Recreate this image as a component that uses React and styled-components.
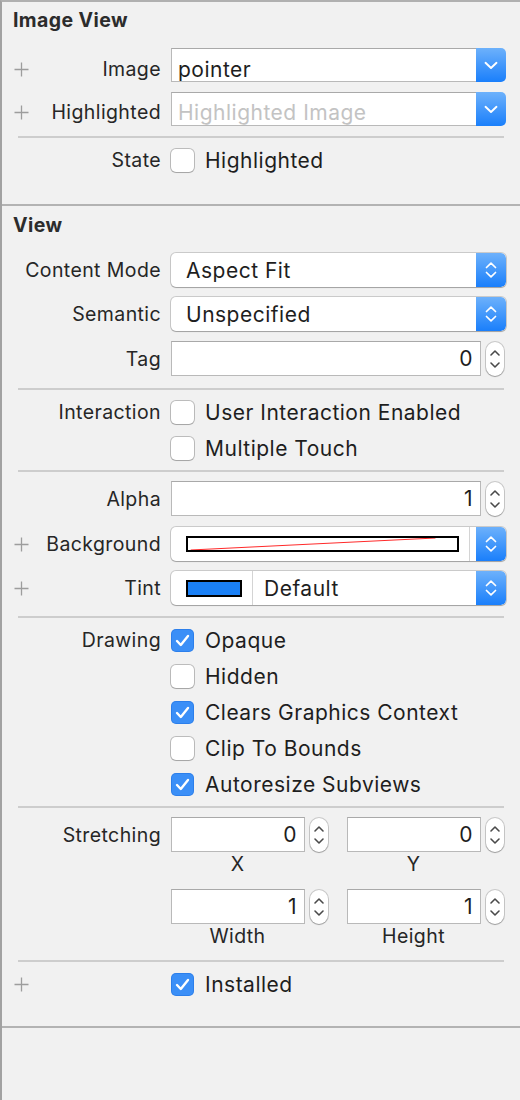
import React from 'react';
import styled, { createGlobalStyle } from 'styled-components';

const Global = createGlobalStyle`
  html, body { margin: 0; padding: 0; background: #f1f1f1; }
  body { font-family: Inter, "Noto Sans", "Liberation Sans", sans-serif; -webkit-font-smoothing: antialiased; }
`;

const Panel = styled.div`
  width: 520px;
  height: 1100px;
  box-sizing: border-box;
  border-left: 2px solid #a2a2a2;
  border-top: 2px solid #b0b0b0;
  background: #f1f1f1;
  color: #262626;
  font-size: 19.5px;
  letter-spacing: 0.4px;
  overflow: hidden;
`;

const Section = styled.section`
  display: flex;
  flex-direction: column;
  padding-bottom: ${p => p.$pb}px;
  border-bottom: 2px solid #b3b3b3;
`;

const Header = styled.div`
  height: ${p => p.$h}px;
  line-height: ${p => p.$h}px;
  padding-left: 11px;
  font-weight: 700;
  color: #2c2c2c;
`;

const Row = styled.div`
  display: flex;
  align-items: ${p => (p.$top ? 'flex-start' : 'center')};
  height: ${p => (p.$h ? `${p.$h}px` : 'auto')};
  margin-top: ${p => p.$mt || 0}px;
`;

const LabelCell = styled.div`
  width: 159px;
  flex: none;
  height: ${p => (p.$h ? `${p.$h}px` : '100%')};
  box-sizing: border-box;
  padding-left: 12px;
  padding-top: ${p => (p.$shift || 0) * 2}px;
  display: flex;
  align-items: center;
  justify-content: space-between;
  margin-right: 10px;
`;

const Label = styled.span`
  margin-left: auto;
  white-space: nowrap;
`;

const Control = styled.div`
  width: 335px;
  flex: none;
  height: 100%;
  display: flex;
  align-items: center;
`;

const Divider = styled.div`
  height: 2px;
  background: #cdcdcd;
  margin: ${p => p.$mt || 0}px 16px 0 16px;
`;

const ValueText = `
  font-size: 21px;
  letter-spacing: 0.5px;
  color: #1e1e1e;
  white-space: nowrap;
`;

const ComboField = styled.div`
  ${ValueText}
  flex: 1;
  height: 100%;
  box-sizing: border-box;
  background: #fff;
  border: 1px solid #b9b9b9;
  border-top-color: #a9a9a9;
  border-right: none;
  padding: ${p => (p.$shift || 0) * 2}px 0 0 6px;
  display: flex;
  align-items: center;
  color: ${p => (p.$ph ? '#c3c3c3' : '#1e1e1e')};
  overflow: hidden;
`;

const BlueButton = styled.div`
  width: 30px;
  height: 100%;
  flex: none;
  background: linear-gradient(#6db1fb, #1a7ffb);
  border-radius: 0 5px 5px 0;
  display: flex;
  align-items: center;
  justify-content: center;
`;

const Popup = styled.div`
  width: 100%;
  height: 100%;
  box-sizing: border-box;
  display: flex;
  align-items: stretch;
  background: #fff;
  border-radius: 5px;
  box-shadow: 0 0 0 1px rgba(0, 0, 0, 0.16), 0 1px 1px rgba(0, 0, 0, 0.2);
  overflow: hidden;
`;

const PopupText = styled.div`
  ${ValueText}
  flex: 1;
  display: flex;
  align-items: center;
  padding-left: ${p => p.$pl}px;
`;

const WellSlot = styled.div`
  flex: ${p => (p.$grow ? 1 : 'none')};
  display: flex;
  align-items: center;
  padding: 0 ${p => p.$pr}px 0 15px;
  margin-right: ${p => p.$mr || 0}px;
  border-right: 1px solid #d4d4d4;
`;

const ColorWell = styled.div`
  position: relative;
  width: ${p => (p.$w ? `${p.$w}px` : '100%')};
  height: ${p => p.$h}px;
  box-sizing: border-box;
  border: 2px solid #000;
  background: ${p => p.$color};
  overflow: hidden;
`;

const WellLine = styled.svg`
  position: absolute;
  inset: 0;
  width: 100%;
  height: 100%;
`;

const NumberField = styled.div`
  ${ValueText}
  flex: 1;
  height: 35px;
  box-sizing: border-box;
  background: #fff;
  border: 1px solid #b9b9b9;
  border-top-color: #a9a9a9;
  display: flex;
  align-items: center;
  justify-content: flex-end;
  padding-right: 7px;
`;

const StepperBox = styled.div`
  width: 18px;
  height: 34px;
  flex: none;
  margin-left: 5px;
  margin-right: ${p => p.$mr || 0}px;
  box-sizing: border-box;
  border-radius: 9px;
  background: #fff;
  box-shadow: 0 0 0 1px rgba(0, 0, 0, 0.17), 0 1px 1px rgba(0, 0, 0, 0.22);
  display: flex;
  align-items: center;
  justify-content: center;
`;

const CheckRow = styled.div`
  display: flex;
  align-items: center;
`;

const Box = styled.div`
  width: 23px;
  height: 23px;
  flex: none;
  box-sizing: border-box;
  border-radius: 5px;
  background: ${p => (p.$on ? '#3b8ff7' : '#fff')};
  box-shadow: ${p =>
    p.$on ? 'inset 0 0 0 1px rgba(0,80,200,0.25)' : '0 0 0 1px rgba(0,0,0,0.22), 0 1px 1px rgba(0,0,0,0.12)'};
  display: flex;
  align-items: center;
  justify-content: center;
`;

const CheckText = styled.span`
  ${ValueText}
  margin-left: 11px;
`;

const StretchGrid = styled.div`
  display: grid;
  grid-template-columns: 157px 157px;
  column-gap: 19px;
  row-gap: 13px;
`;

const StretchCell = styled.div`
  display: flex;
  flex-direction: column;
`;

const FieldLine = styled.div`
  display: flex;
  align-items: center;
`;

const Caption = styled.div`
  width: 133px;
  height: 24px;
  line-height: 24px;
  text-align: center;
  color: #262626;
`;

const PlusIcon = () => (
  <svg width="15" height="15" viewBox="0 0 15 15">
    <path d="M7.5 0.5V14.5M0.5 7.5H14.5" stroke="#9d9d9d" strokeWidth="1.3" fill="none" />
  </svg>
);

const ChevronDown = () => (
  <svg width="14" height="9" viewBox="0 0 14 9">
    <path d="M1.5 1.8L7 7L12.5 1.8" stroke="#fff" strokeWidth="1.9" fill="none" strokeLinecap="round" strokeLinejoin="round" />
  </svg>
);

const UpDown = () => (
  <svg width="12" height="20" viewBox="0 0 12 20">
    <path d="M1.5 7.5L6 3.2L10.5 7.5M1.5 12.5L6 16.8L10.5 12.5" stroke="#fff" strokeWidth="1.7" fill="none" strokeLinecap="round" strokeLinejoin="round" />
  </svg>
);

const Stepper = ({ mr }) => (
  <StepperBox $mr={mr}>
    <svg width="12" height="26" viewBox="0 0 12 26">
      <path d="M2 9L6 5L10 9M2 17L6 21L10 17" stroke="#4a4a4a" strokeWidth="1.6" fill="none" strokeLinecap="round" strokeLinejoin="round" />
    </svg>
  </StepperBox>
);

const Check = ({ on, children }) => (
  <CheckRow>
    <Box $on={on}>
      {on && (
        <svg width="15" height="13" viewBox="0 0 15 13">
          <path d="M2 7L5.8 11L13 2" stroke="#fff" strokeWidth="2.4" fill="none" strokeLinecap="round" strokeLinejoin="round" />
        </svg>
      )}
    </Box>
    {children && <CheckText>{children}</CheckText>}
  </CheckRow>
);

const LabelFor = ({ plus, text, h, shift }) => (
  <LabelCell $h={h} $shift={shift}>
    {plus ? <PlusIcon /> : <span />}
    {text && <Label>{text}</Label>}
  </LabelCell>
);

const ComboRow = ({ label, value, ph, mt, shift }) => (
  <Row $h={34} $mt={mt}>
    <LabelFor plus text={label} shift={shift} />
    <Control>
      <ComboField $ph={ph} $shift={shift}>{value}</ComboField>
      <BlueButton>
        <ChevronDown />
      </BlueButton>
    </Control>
  </Row>
);

const PopupRow = ({ label, value, mt }) => (
  <Row $h={34} $mt={mt}>
    <LabelFor text={label} />
    <Control>
      <Popup>
        <PopupText $pl={15}>{value}</PopupText>
        <BlueButton>
          <UpDown />
        </BlueButton>
      </Popup>
    </Control>
  </Row>
);

const NumberRow = ({ label, value, mt }) => (
  <Row $h={35} $mt={mt}>
    <LabelFor text={label} />
    <Control>
      <NumberField>{value}</NumberField>
      <Stepper mr={2} />
    </Control>
  </Row>
);

const CheckLine = ({ label, on, text, mt, plus }) => (
  <Row $h={24} $mt={mt}>
    <LabelFor text={label} plus={plus} />
    <Control>
      <Check on={on}>{text}</Check>
    </Control>
  </Row>
);

const StretchField = ({ value, caption }) => (
  <StretchCell>
    <FieldLine>
      <NumberField>{value}</NumberField>
      <Stepper />
    </FieldLine>
    <Caption>{caption}</Caption>
  </StretchCell>
);

export default function App() {
  return (
    <>
      <Global />
      <Panel>
        <Section $pb={32}>
          <Header $h={36}>Image View</Header>
          <ComboRow label="Image" value="pointer" mt={10} shift={4} />
          <ComboRow label="Highlighted" value="Highlighted Image" ph mt={10} shift={3} />
          <Divider $mt={10} />
          <CheckLine label="State" text="Highlighted" mt={10} />
        </Section>

        <Section $pb={30}>
          <Header $h={38}>View</Header>
          <PopupRow label="Content Mode" value="Aspect Fit" mt={9} />
          <PopupRow label="Semantic" value="Unspecified" mt={10} />
          <NumberRow label="Tag" value="0" mt={10} />
          <Divider $mt={12} />
          <CheckLine label="Interaction" text="User Interaction Enabled" mt={10} />
          <CheckLine text="Multiple Touch" mt={12} />
          <Divider $mt={10} />
          <NumberRow label="Alpha" value="1" mt={9} />

          <Row $h={34} $mt={11}>
            <LabelFor plus text="Background" />
            <Control>
              <Popup>
                <WellSlot $grow $pr={10} $mr={6}>
                  <ColorWell $h={16} $color="#fff">
                    <WellLine viewBox="0 0 100 10" preserveAspectRatio="none">
                      <line x1="1" y1="10" x2="92" y2="0" stroke="#ff2a2a" strokeWidth="1" vectorEffect="non-scaling-stroke" />
                    </WellLine>
                  </ColorWell>
                </WellSlot>
                <BlueButton>
                  <UpDown />
                </BlueButton>
              </Popup>
            </Control>
          </Row>

          <Row $h={34} $mt={10}>
            <LabelFor plus text="Tint" />
            <Control>
              <Popup>
                <WellSlot $pr={10}>
                  <ColorWell $w={56} $h={17} $color="#1a80f6" />
                </WellSlot>
                <PopupText $pl={11}>Default</PopupText>
                <BlueButton>
                  <UpDown />
                </BlueButton>
              </Popup>
            </Control>
          </Row>

          <Divider $mt={11} />
          <CheckLine label="Drawing" on text="Opaque" mt={10} />
          <CheckLine text="Hidden" mt={12} />
          <CheckLine on text="Clears Graphics Context" mt={12} />
          <CheckLine text="Clip To Bounds" mt={12} />
          <CheckLine on text="Autoresize Subviews" mt={12} />
          <Divider $mt={10} />

          <Row $top $mt={9}>
            <LabelFor text="Stretching" h={35} />
            <StretchGrid>
              <StretchField value="0" caption="X" />
              <StretchField value="0" caption="Y" />
              <StretchField value="1" caption="Width" />
              <StretchField value="1" caption="Height" />
            </StretchGrid>
          </Row>

          <Divider $mt={12} />
          <CheckLine plus on text="Installed" mt={10} />
        </Section>
      </Panel>
    </>
  );
}
